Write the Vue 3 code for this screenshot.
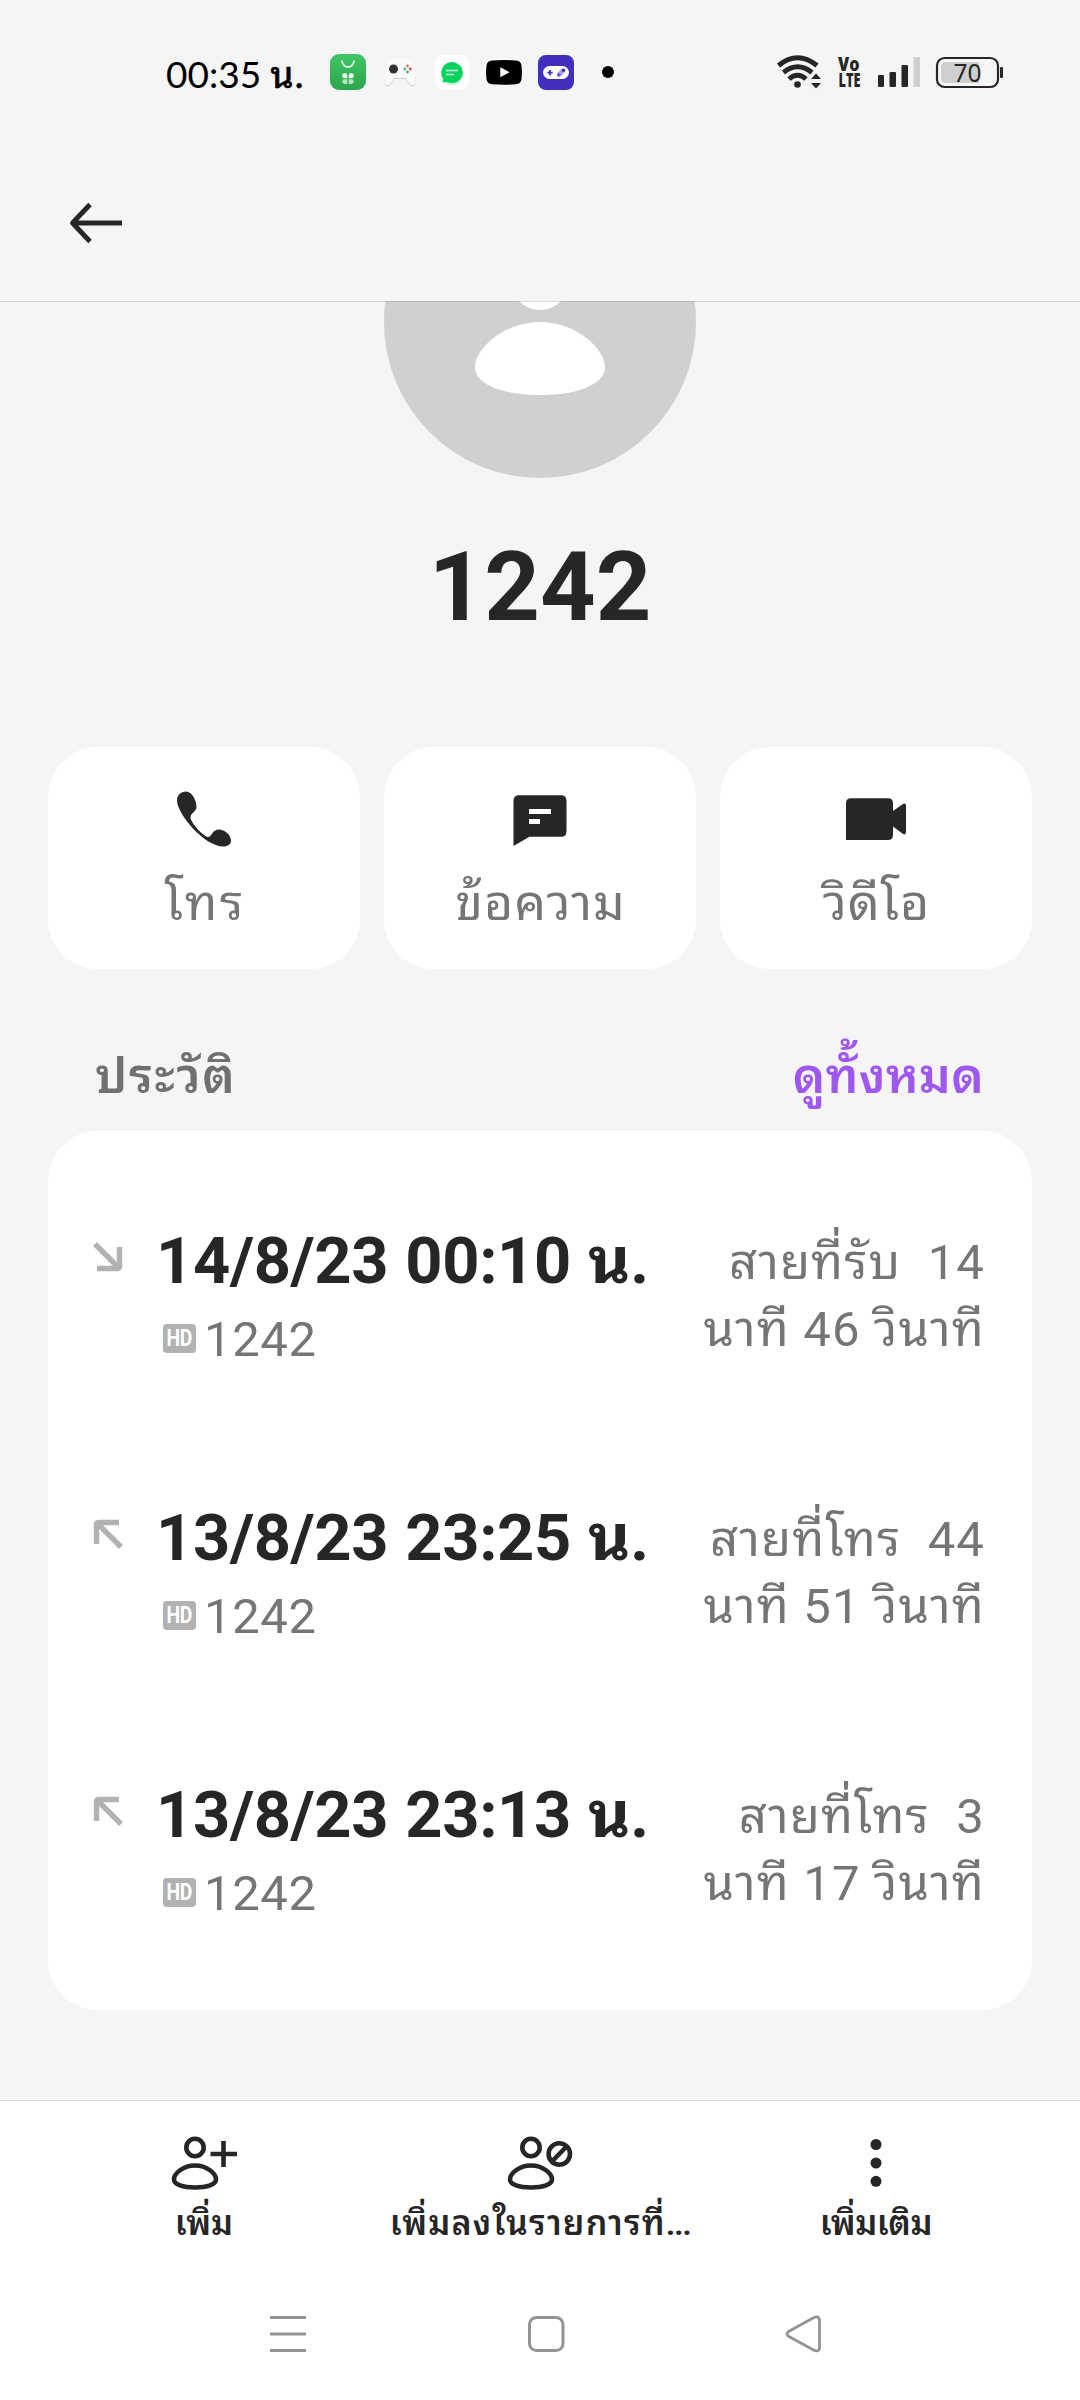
<script setup>
const calls = [
  { dir: 'in', when: '14/8/23 00:10', l1: 'สายที่รับ\u00a0 14', l2: 'นาที 46 วินาที' },
  { dir: 'out', when: '13/8/23 23:25', l1: 'สายที่โทร\u00a0 44', l2: 'นาที 51 วินาที' },
  { dir: 'out', when: '13/8/23 23:13', l1: 'สายที่โทร\u00a0 3', l2: 'นาที 17 วินาที' },
]
</script>

<template>
  <div class="screen">
    <div class="status">
      <span class="time">00:35 <span class="unit">น.</span></span>
      <div class="apps">
        <svg width="36" height="36" viewBox="0 0 36 36">
          <defs><linearGradient id="g" x1="0" y1="0" x2="0" y2="1"><stop offset="0" stop-color="#3fc766" /><stop offset="1" stop-color="#2ba44b" /></linearGradient></defs>
          <rect width="36" height="36" rx="9" fill="url(#g)" />
          <path d="M12 6.500a6 6.500 0 0 0 12 0" fill="none" stroke="#d5f3dc" stroke-width="2" />
          <g fill="#e3f6e7"><path d="M17.300 24.300h-2.800a2.600 2.600 0 1 1 2.800-2.800zM18.700 24.300v-2.800a2.600 2.600 0 1 1 2.800 2.800z" /><path d="M17.300 25.300v4.700h-2.600a2.400 2.400 0 0 1-2.400-2.400 2.300 2.300 0 0 1 2.400-2.300zM18.700 25.300v4.700h2.600a2.400 2.400 0 0 0 2.400-2.400 2.300 2.300 0 0 0-2.400-2.300z" opacity=".75" /></g>
        </svg>
        <svg width="36" height="36" viewBox="0 0 36 36">
          <path d="M6.500 6.500Q10 3.500 13 6h10q3-2.500 6.500.500 2.500 8 4 20 .5 6-3.500 6-2.500-.5-6-7.500H12Q8.500 32 6 32.500q-4 0-3.500-6 1.500-12 4-20z" fill="#cacaca" />
          <path d="M6.500 5.500Q10 2.500 13 5h10q3-2.500 6.500.500 2.500 8 4 20 .5 6-3.500 6-2.500-.5-6-7.500H12Q8.500 31 6 31.500q-4 0-3.500-6 1.500-12 4-20z" fill="#fafafa" />
          <circle cx="11.500" cy="15" r="4.500" fill="#333" />
          <circle cx="25.500" cy="12" r="1.400" fill="#e7793f" /><circle cx="22.800" cy="15" r="1.400" fill="#49b99a" /><circle cx="28.300" cy="15" r="1.400" fill="#d9472b" /><circle cx="25.500" cy="18" r="1.400" fill="#49a99a" />
        </svg>
        <svg width="36" height="36" viewBox="0 0 36 36">
          <rect x="1" y="1" width="34" height="34.500" rx="8" fill="#fff" />
          <circle cx="18" cy="20" r="11" fill="#b9f4ce" />
          <path d="M18 8a11 10.500 0 1 1-5 20l-4.500.500.800-4A11 10.500 0 0 1 18 8z" fill="#05d35c" />
          <path d="M12 16.500h12M12 20.500h8" stroke="#d5ffe4" stroke-width="1.600" />
        </svg>
        <svg width="36" height="36" viewBox="0 0 36 36"><path d="M6 6.500Q18 5.500 30 6.500q5 .3 5.500 5 .8 7 0 13.500-.5 5-5.500 5.300-12 .9-24 0-5-.3-5.500-5.300-.8-7 0-13.500.5-4.700 5.500-5z" /><path d="M14.300 13.300v10l9.300-5z" fill="#fff" /></svg>
        <svg width="36" height="36" viewBox="0 0 36 36">
          <rect y="1" width="36" height="35" rx="8" fill="#412fc0" />
          <rect x="5" y="12" width="26" height="13" rx="6.500" fill="#fff" />
          <path d="M12 16v5.400M9.300 18.700h5.400" stroke="#412fc0" stroke-width="1.800" />
          <path d="M20.800 20.800l4-4" stroke="#a79ee2" stroke-width="4.500" stroke-linecap="round" /><circle cx="25.500" cy="16.300" r="1.800" fill="#412fc0" /><circle cx="21" cy="20.700" r="1.600" fill="#6d5fd0" />
        </svg>
        <svg width="36" height="36" viewBox="0 0 36 36"><circle cx="18" cy="18" r="6" /></svg>
      </div>
      <svg class="sys" width="240" height="40" viewBox="770 52 240 40">
        <g fill="none" stroke="#262626">
          <path d="M778.500 65.500q19-15.500 38.500 0" stroke-width="5" />
          <path d="M783.500 72.500q14-11.500 28.500 0" stroke-width="5" />
          <path d="M789 79q8.500-7.500 17 0" stroke-width="5" />
        </g>
        <g fill="#262626">
          <circle cx="797.500" cy="84.500" r="3.300" />
          <path d="M811 79l5-5.500 5 5.500zM811 83l5 5.500 5-5.500z" />
          <rect x="878" y="75" width="6" height="12" rx="1" />
          <rect x="889.500" y="72" width="6.500" height="15" rx="1" />
          <rect x="901.500" y="65" width="6.500" height="22" rx="1" />
          <rect x="913.500" y="57" width="6.500" height="30" rx="1" fill="#cfcfcf" />
        </g>
        <g font-family="'Open Sans', 'Noto Sans', sans-serif" font-weight="800" fill="#262626">
          <text x="838" y="71" font-size="19" textLength="21.500" lengthAdjust="spacingAndGlyphs">Vo</text>
          <text x="838.500" y="86.700" font-size="19.500" textLength="22" lengthAdjust="spacingAndGlyphs">LTE</text>
        </g>
        <rect x="937" y="58" width="61" height="29" rx="7.500" fill="none" stroke="#262626" stroke-width="2.200" />
        <path d="M946 62h33v21h-33q-5 0-5-5v-11q0-5 5-5z" fill="#cfcfcf" />
        <rect x="1000" y="67" width="3" height="11" rx="1" fill="#262626" />
        <text x="953.500" y="81.500" font-family="'Noto Sans', sans-serif" font-size="25" fill="#262626" textLength="28" lengthAdjust="spacingAndGlyphs">70</text>
      </svg>
    </div>

    <div class="bar">
      <svg width="56" height="44" viewBox="68 201 56 44" fill="none" stroke="#262626" stroke-width="4.800" stroke-linejoin="round"><path d="M122 223H73M90 204.500L72.500 223 90 241.500" /></svg>
    </div>

    <svg class="hero" width="1080" height="177" viewBox="0 301 1080 177">
      <circle cx="540" cy="322" r="156" fill="#d0d0d0" />
      <circle cx="540" cy="281" r="29" fill="#fff" />
      <path d="M540 322c36 0 65 27 65 45s-29 28-65 28-65-10-65-28 29-45 65-45z" fill="#fff" />
      <rect y="301" width="1080" height="1" fill="#000" opacity=".13" />
    </svg>

    <div class="name">1242</div>

    <div class="actions">
      <div class="action">
        <svg width="60" height="60" viewBox="174 789 60 60" fill="#262626"><path d="M186 792c6 0 10.500 9 10.500 15.500 0 4.500-6 6-6 10.500 0 5 13 19 17.500 19.500 4 0 4-7.500 11-7.500 5.500 0 12 5.500 12 11 0 3.500-3 6-7.500 6C204 847 177 814 177 801c0-5.500 4-9 9-9z" transform="translate(0 -.500)" /></svg>
        <span class="a1">โทร</span>
      </div>
      <div class="action">
        <svg width="60" height="60" viewBox="510 789 60 60" fill="#262626"><path fill-rule="evenodd" d="M519 795.300h42q5.500 0 5.500 5.500v30.500q0 5.500-5.500 5.500h-31.500L513.500 846v-45.200q0-5.500 5.500-5.500zM529 809v5h22v-5zM529 819v5h11v-5z" /></svg>
        <span class="a2">ข้อความ</span>
      </div>
      <div class="action">
        <svg width="60" height="60" viewBox="846 789 60 60" fill="#262626"><path d="M851 798.300h37q5 0 5 5V811l10-7q3-1.500 3 2v26q0 3.500-3 2l-10-7.500v8.500q0 5-5 5h-42v-36.700q0-5 5-5z" /></svg>
        <span class="a3">วิดีโอ</span>
      </div>
    </div>

    <div class="section">
      <span class="history">ประวัติ</span>
      <span class="all">ดูทั้งหมด</span>
    </div>

    <div class="log">
      <div v-for="c in calls" :key="c.when" class="row">
        <svg class="dir" :class="c.dir" width="30" height="30" viewBox="0 0 30 30" fill="none" stroke="#b2b2b2" stroke-width="5.500"><path d="M2 2l23 23" /><path d="M26.500 5v19q0 2.500-2.500 2.500H4" /></svg>
        <div class="main">
          <div class="when">{{ c.when }} น.</div>
          <div class="sub"><span class="hd"><b>HD</b></span><span>1242</span></div>
        </div>
        <div class="dur"><div>{{ c.l1 }}</div><div>{{ c.l2 }}</div></div>
      </div>
    </div>

    <div class="footer">
      <div class="tabs">
        <div class="tab">
          <svg width="70" height="60" viewBox="169 2133 70 60" fill="none" stroke="#262626" stroke-width="4.600"><circle cx="195" cy="2147.500" r="8.700" /><path d="M195 2165.500c12 0 21 8 21 14 0 5-9 8-21 8s-21-3-21-8c0-6 9-14 21-14z" /><path d="M210.500 2154H237M223.500 2141v26" /></svg>
          <span>เพิ่ม</span>
        </div>
        <div class="tab">
          <svg width="70" height="60" viewBox="505 2133 70 60" fill="none" stroke="#262626" stroke-width="4.600"><circle cx="531" cy="2147.500" r="8.700" /><path d="M531 2165.500c12 0 21 8 21 14 0 5-9 8-21 8s-21-3-21-8c0-6 9-14 21-14z" /><circle cx="559.300" cy="2154" r="10.700" /><path d="M552 2161.500l14.500-15" /></svg>
          <span class="t2">เพิ่มลงในรายการที่<span class="dots">...</span></span>
        </div>
        <div class="tab">
          <svg width="70" height="60" viewBox="841 2133 70 60" fill="#262626"><circle cx="876" cy="2144.500" r="5.500" /><circle cx="876" cy="2163" r="5.500" /><circle cx="876" cy="2181.300" r="5.500" /></svg>
          <span class="t3">เพิ่มเติม</span>
        </div>
      </div>
      <div class="nav">
        <svg width="38" height="38" viewBox="269 2315 38 38" stroke="#949494" stroke-width="3"><path d="M270 2317.500h36M270 2334h36M270 2350.500h36" /></svg>
        <svg width="38" height="38" viewBox="527 2315 38 38" fill="none" stroke="#949494" stroke-width="3"><rect x="529.500" y="2317.500" width="33.500" height="33" rx="7" /></svg>
        <svg width="38" height="38" viewBox="785 2315 38 38" fill="none" stroke="#949494" stroke-width="2.800"><path d="M788.500 2331.500l25-13.700q5.500-2.500 6 2.200v28q-.5 4.500-6 2l-25-13.700q-3-2.400 0-4.800z" /></svg>
      </div>
    </div>
  </div>
</template>

<style>
body { margin: 0; background: #f5f5f5; }
</style>

<style scoped>
.screen { width: 1080px; height: 2400px; background: #f5f5f5; color: #262626; font-family: Roboto, "Noto Sans Thai Looped", "Noto Looped Thai", "Droid Sans Thai", Loma, Waree, Garuda, FreeSans, Tahoma, "Noto Sans", sans-serif; display: flex; flex-direction: column; overflow: hidden; }
svg { display: block; flex: none; }
.status { height: 144px; display: flex; align-items: center; padding-left: 166px; box-sizing: border-box; flex: none; }
.time { width: 164px; font: 37px/48px Lato, "Noto Sans Thai Looped", "Noto Looped Thai", "Droid Sans Thai", Loma, Waree, Garuda, FreeSans, sans-serif; color: #000; white-space: nowrap; padding-top: 3px; }
.unit { -webkit-text-stroke: .7px #000; letter-spacing: 1px; }
.apps { display: flex; gap: 16px; flex: none; }
.sys { margin-left: 144px; }
.bar { height: 157px; padding: 57px 0 0 68px; box-sizing: border-box; flex: none; }
.hero { flex: none; }
.name { margin-top: 53px; font-size: 97px; line-height: 112px; font-weight: 700; text-align: center; }
.actions { margin: 104px 48px 0; display: flex; gap: 24px; }
.action { flex: 1; height: 222px; box-sizing: border-box; padding-top: 42px; background: #fff; border-radius: 50px; display: flex; flex-direction: column; align-items: center; gap: 24px; font-size: 50px; line-height: 60px; color: #757575; }
.a1 { letter-spacing: 2.4px; margin-right: -2.4px; }
.a2 { letter-spacing: 1px; margin-right: -1px; }
.a3 { letter-spacing: .9px; margin-right: -.9px; }
.section { margin: 78px 96px 24px; display: flex; justify-content: space-between; font-size: 49px; line-height: 60px; font-weight: 600; height: 60px; }
.history { color: #707070; letter-spacing: 1.6px; margin-left: -1px; }
.all { color: #9f57f0; letter-spacing: .3px; }
.log { margin: 0 48px; height: 879px; box-sizing: border-box; padding: 24px 48px; background: #fff; border-radius: 50px; flex: none; }
.row { height: 277px; display: flex; }
.dir { margin: 87px 38px 0 -3px; }
.dir.out { transform: rotate(180deg); margin-left: -3px; margin-right: 38px; }
.main { padding-top: 66px; flex: 1; }
.when { font-size: 65px; line-height: 80px; font-weight: 700; white-space: nowrap; margin-left: -5px; letter-spacing: -.35px; word-spacing: 1.2px; }
.sub { margin-top: 11px; display: flex; align-items: center; font-size: 49px; line-height: 56px; color: #757575; padding-left: 2px; letter-spacing: .6px; }
.hd { width: 33px; height: 29px; margin: -3px 8px 0 0; border-radius: 4px; background: #b2b2b2; color: #fff; font-size: 23px; line-height: 30px; display: flex; justify-content: center; letter-spacing: -.5px; }
.hd b { transform: scaleX(.84); }
.dur { padding-top: 74px; font-size: 49px; line-height: 67px; color: #757575; text-align: right; white-space: nowrap; letter-spacing: 1.1px; margin-right: -1px; }
.footer { margin-top: 90px; height: 300px; box-sizing: border-box; border-top: 1px solid #dcdcdc; background: #fff; flex: none; }
.tabs { display: flex; gap: 24px; margin: 0 48px; padding-top: 32px; height: 214px; box-sizing: border-box; }
.tab { width: 312px; display: flex; flex-direction: column; align-items: center; font-size: 34px; line-height: 40px; font-weight: 600; white-space: nowrap; gap: 10px; }
.t2 { letter-spacing: 1.2px; }
.dots { letter-spacing: -1.5px; }
.t3 { letter-spacing: -.4px; }
.nav { display: flex; gap: 220px; padding-left: 269px; }
</style>
